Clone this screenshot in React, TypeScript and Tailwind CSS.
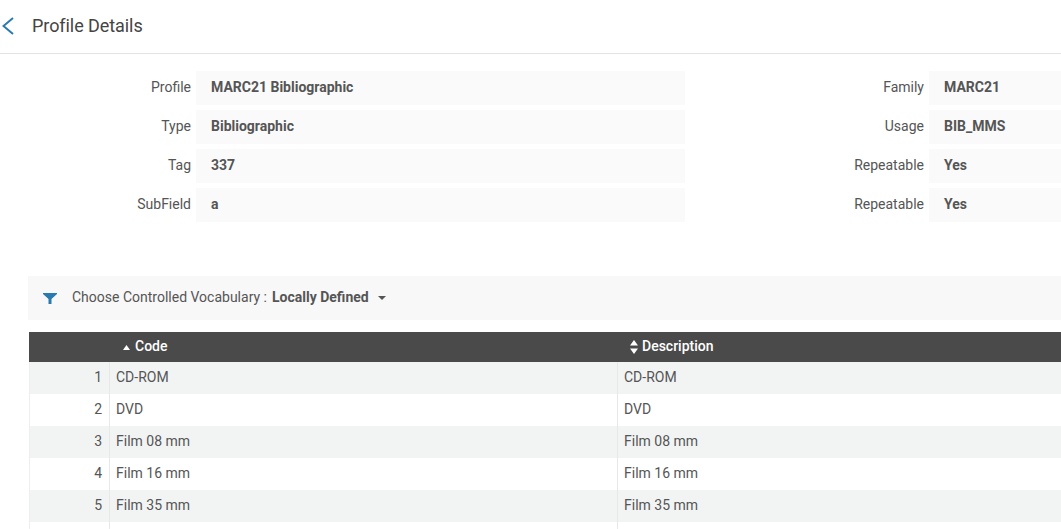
import React from 'react';

const fields = [
  { label: 'Profile', value: 'MARC21 Bibliographic', label2: 'Family', value2: 'MARC21' },
  { label: 'Type', value: 'Bibliographic', label2: 'Usage', value2: 'BIB_MMS' },
  { label: 'Tag', value: '337', label2: 'Repeatable', value2: 'Yes' },
  { label: 'SubField', value: 'a', label2: 'Repeatable', value2: 'Yes' },
];

const rows = ['CD-ROM', 'DVD', 'Film 08 mm', 'Film 16 mm', 'Film 35 mm', ''];

const App: React.FC = () => {
  return (
    <div className="h-[529px] w-[1061px] overflow-hidden bg-white font-['Roboto',sans-serif] text-sm text-[#555]">
      <header className="flex h-[54px] items-center border-b border-[#e2e2e2] pb-[2px]">
        <svg className="ml-[2px] h-[18px] w-[12px] text-[#2a7ab0]" viewBox="0 0 12 18" fill="none" stroke="currentColor" strokeWidth="2">
          <path d="M11 1 L1.5 9 L11 17" />
        </svg>
        <h1 className="ml-[18px] text-lg tracking-[-0.07px] text-[#444]">Profile Details</h1>
      </header>

      <div className="mt-[17px] flex flex-col gap-[5px]">
        {fields.map((f, i) => (
          <div key={i} className="flex h-[34px] items-stretch">
            <div className="flex w-[191px] items-center justify-end pb-[2px]">{f.label}</div>
            <div className="ml-[5px] flex w-[489px] items-center bg-[#fafafa] pb-[2px] pl-[15px] font-bold">{f.value}</div>
            <div className="flex w-[239px] items-center justify-end pb-[2px]">{f.label2}</div>
            <div className="ml-[5px] flex w-[132px] items-center bg-[#fafafa] pb-[2px] pl-[15px] font-bold">{f.value2}</div>
          </div>
        ))}
      </div>

      <div className="mt-[54px] ml-[28px] flex h-[44px] items-center bg-[#f8f8f8]">
        <svg className="ml-[15px] h-[11px] w-[14px] text-[#2a7ab0]" viewBox="0 0 14 11" fill="currentColor">
          <path d="M0 0 H14 V1 L8.5 6 V11 H5.5 V6 L0 1 Z" />
        </svg>
        <span className="ml-[15px] pb-[2px]">Choose Controlled Vocabulary :</span>
        <span className="ml-[5px] pb-[2px] font-bold">Locally Defined</span>
        <svg className="ml-[9px] h-[4px] w-[8px] text-[#555]" viewBox="0 0 8 4" fill="currentColor">
          <path d="M0 0 H8 L4 4 Z" />
        </svg>
      </div>

      <div className="mt-[12px] ml-[29px]">
        <div className="flex h-[30px] items-center bg-[#4a4a4a] font-medium text-white">
          <div className="flex w-[588px] items-center pl-[94px]">
            <svg className="h-[5px] w-[7px]" viewBox="0 0 7 5" fill="currentColor">
              <path d="M3.5 0 L7 5 H0 Z" />
            </svg>
            <span className="ml-[5px] pb-[2px]">Code</span>
          </div>
          <div className="flex items-center pl-[13px]">
            <svg className="h-[14px] w-[8px]" viewBox="0 0 8 14" fill="currentColor">
              <path d="M4 0 L8 5.5 H0 Z M0 8.5 H8 L4 14 Z" />
            </svg>
            <span className="ml-[4px] pb-[2px]">Description</span>
          </div>
        </div>
        {rows.map((r, i) => (
          <div key={i} className={`flex h-[32px] items-center border-l border-[#eee] ${i % 2 === 0 ? 'bg-[#f2f4f4]' : 'bg-white'}`}>
            <div className="flex h-full w-[80px] items-center justify-end border-r border-[#e8e8e8] pr-[7px] pb-[2px]">{r ? i + 1 : ''}</div>
            <div className="flex h-full w-[508px] items-center border-r border-[#e8e8e8] pb-[2px] pl-[6px]">{r}</div>
            <div className="pb-[2px] pl-[6px]">{r}</div>
          </div>
        ))}
      </div>
    </div>
  );
};

export default App;
